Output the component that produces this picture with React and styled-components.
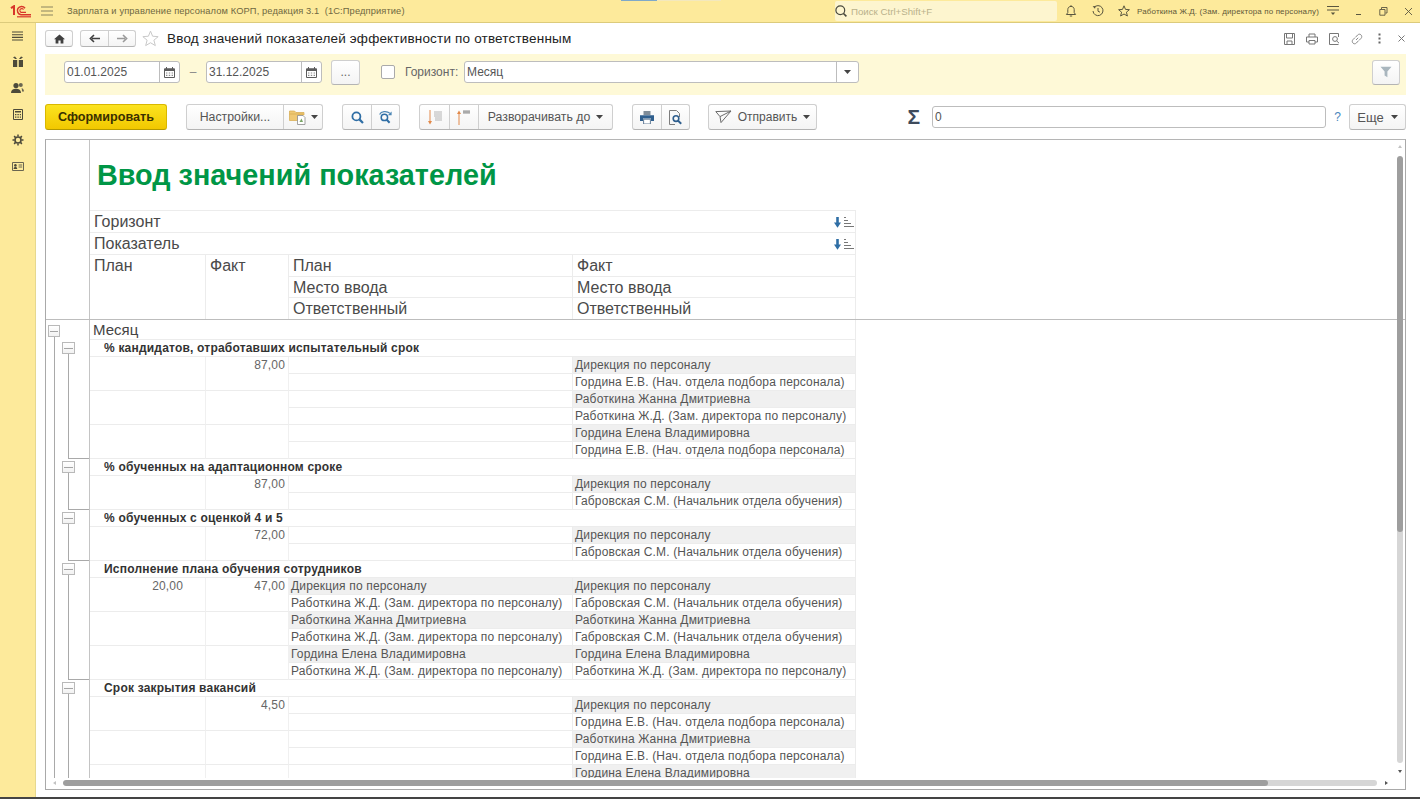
import React from "react";
import styled, { createGlobalStyle } from "styled-components";

const GlobalStyle = createGlobalStyle`
  html, body {
    margin: 0;
    padding: 0;
    background: #fff;
    overflow: hidden;
  }
  * { box-sizing: border-box; }
  body {
    font-family: "Liberation Sans", Arial, sans-serif;
    color: #4a4a4a;
  }
`;

const groups = [
  {
    title: "% кандидатов, отработавших испытательный срок",
    pairs: [
      { fact: "87,00", rows: [["", "Дирекция по персоналу"], ["", "Гордина Е.В. (Нач. отдела подбора персонала)"]] },
      { rows: [["", "Работкина Жанна Дмитриевна"], ["", "Работкина Ж.Д. (Зам. директора по персоналу)"]] },
      { rows: [["", "Гордина Елена Владимировна"], ["", "Гордина Е.В. (Нач. отдела подбора персонала)"]] },
    ],
  },
  {
    title: "% обученных на адаптационном сроке",
    pairs: [
      { fact: "87,00", rows: [["", "Дирекция по персоналу"], ["", "Габровская С.М. (Начальник отдела обучения)"]] },
    ],
  },
  {
    title: "% обученных с оценкой 4 и 5",
    pairs: [
      { fact: "72,00", rows: [["", "Дирекция по персоналу"], ["", "Габровская С.М. (Начальник отдела обучения)"]] },
    ],
  },
  {
    title: "Исполнение плана обучения сотрудников",
    pairs: [
      {
        plan: "20,00",
        fact: "47,00",
        rows: [
          ["Дирекция по персоналу", "Дирекция по персоналу"],
          ["Работкина Ж.Д. (Зам. директора по персоналу)", "Габровская С.М. (Начальник отдела обучения)"],
        ],
      },
      {
        rows: [
          ["Работкина Жанна Дмитриевна", "Работкина Жанна Дмитриевна"],
          ["Работкина Ж.Д. (Зам. директора по персоналу)", "Габровская С.М. (Начальник отдела обучения)"],
        ],
      },
      {
        rows: [
          ["Гордина Елена Владимировна", "Гордина Елена Владимировна"],
          ["Работкина Ж.Д. (Зам. директора по персоналу)", "Работкина Ж.Д. (Зам. директора по персоналу)"],
        ],
      },
    ],
  },
  {
    title: "Срок закрытия вакансий",
    pairs: [
      { fact: "4,50", rows: [["", "Дирекция по персоналу"], ["", "Гордина Е.В. (Нач. отдела подбора персонала)"]] },
      { rows: [["", "Работкина Жанна Дмитриевна"], ["", "Гордина Е.В. (Нач. отдела подбора персонала)"]] },
      { rows: [["", "Гордина Елена Владимировна"]] },
    ],
  },
];

// Icons
const Svg = ({ size = 16, h, children }) => (
  <svg width={size} height={h || size} viewBox={`0 0 ${size} ${h || size}`} fill="none" style={{ display: "block", flex: "none" }}>
    {children}
  </svg>
);

const Logo = () => (
  <svg width="22" height="13" viewBox="0 0 22 13" fill="none" style={{ display: "block" }}>
    <path d="M1 3.2 L4 1.2 V10" stroke="#d8352a" strokeWidth="2" />
    <path d="M15 3.2 A4.2 4.2 0 1 0 11 9.8 H21" stroke="#d8352a" strokeWidth="1.5" />
    <path d="M13.6 4.6 A2 2 0 1 0 11 7.4 H16" stroke="#d8352a" strokeWidth="1.1" />
    <path d="M7 11.8 H21" stroke="#d8352a" strokeWidth="1.2" />
  </svg>
);

const BurgerThin = ({ color = "#8a8460", width = 12 }) => (
  <Svg size={width} h={10}>
    <path d={`M0 1H${width}M0 5H${width}M0 9H${width}`} stroke={color} />
  </Svg>
);

const SideMenu = () => (
  <Svg size={11} h={10}>
    <path d="M0 1H11M0 3.7H11M0 6.4H11M0 9H11" stroke="#4d4a3a" strokeWidth="1.1" />
  </Svg>
);
const SideGift = () => (
  <Svg size={12}>
    <path d="M1 4H5.2V11H1ZM6.8 4H11V11H6.8ZM1 1.2L3.2 3H5L3 .6ZM11 1.2L8.8 3H7L9 .6Z" fill="#4d4a3a" />
  </Svg>
);
const SideUsers = () => (
  <Svg size={13} h={12}>
    <circle cx="5" cy="3.6" r="2.6" fill="#4d4a3a" />
    <path d="M0 11C0 8 2 6.8 5 6.8S10 8 10 11Z" fill="#4d4a3a" />
    <circle cx="9.8" cy="3" r="2" fill="#6a6651" />
    <path d="M10.6 6C12 6.4 13 7.6 13 9.6H11C11 8 10.8 7 10.6 6Z" fill="#6a6651" />
  </Svg>
);
const SideCalc = () => (
  <Svg size={10} h={11}>
    <path d="M.5.5H9.5V10.5H.5Z" stroke="#4d4a3a" />
    <path d="M2 2H8V3.6H2ZM2 5H3.4V6.2H2ZM4.4 5H5.8V6.2H4.4ZM6.8 5H8V6.2H6.8ZM2 7.4H3.4V8.8H2ZM4.4 7.4H5.8V8.8H4.4ZM6.8 7.4H8V8.8H6.8Z" fill="#4d4a3a" />
  </Svg>
);
const SideGear = () => (
  <Svg size={12}>
    <circle cx="6" cy="6" r="3" stroke="#4d4a3a" strokeWidth="1.6" />
    <path d="M6 .5V2.6M6 9.4V11.5M.5 6H2.6M9.4 6H11.5M2.1 2.1L3.6 3.6M8.4 8.4L9.9 9.9M9.9 2.1L8.4 3.6M3.6 8.4L2.1 9.9" stroke="#4d4a3a" strokeWidth="1.5" />
  </Svg>
);
const SideCard = () => (
  <Svg size={12} h={9}>
    <path d="M.5.5H11.5V8.5H.5Z" stroke="#6a6651" />
    <circle cx="3.4" cy="3.4" r="1.3" fill="#4d4a3a" />
    <path d="M1.6 7C1.6 5.6 2.4 5 3.4 5S5.2 5.6 5.2 7Z" fill="#4d4a3a" />
    <path d="M6.6 3H10.2M6.6 5H10.2" stroke="#6a6651" />
  </Svg>
);

const SearchGlass = () => (
  <Svg size={12}>
    <circle cx="5.3" cy="5.3" r="4.4" stroke="#4a4a3e" strokeWidth="1.2" />
    <path d="M8.5 8.5L11.4 11.4" stroke="#4a4a3e" strokeWidth="1.6" />
  </Svg>
);
const Bell = () => (
  <Svg size={12}>
    <path d="M1.4 9.5H10.6L9.2 7.6V4.6C9.2 2.6 7.8 1.4 6 1.4S2.8 2.6 2.8 4.6V7.6Z" stroke="#5a563f" />
    <path d="M6 .2V1.4M4.8 11H7.2" stroke="#5a563f" />
  </Svg>
);
const History = () => (
  <Svg size={12}>
    <path d="M2 2.6A5 5 0 1 1 1 6" stroke="#5a563f" />
    <path d="M.6 1.2L3.8 1L3 3.8Z" fill="#5a563f" />
    <path d="M6 3V6.2L8 7.2" stroke="#5a563f" />
  </Svg>
);
const Star = ({ size = 12, color = "#5a563f" }) => (
  <svg width={size} height={size} viewBox="0 0 12 12" fill="none" style={{ display: "block", flex: "none" }}>
    <path d="M6 .8L7.5 4.4L11.4 4.7L8.4 7.2L9.4 11L6 9L2.6 11L3.6 7.2L.6 4.7L4.5 4.4Z" stroke={color} strokeWidth={12 / size} />
  </svg>
);
const MenuArrow = () => (
  <Svg size={12} h={10}>
    <path d="M0 .5H12M0 4H12" stroke="#5a563f" />
    <path d="M3.8 6.6H8.2L6 9Z" fill="#5a563f" />
  </Svg>
);
const WinMin = () => (
  <Svg size={8} h={8}>
    <path d="M1 7.5H6" stroke="#5a563f" />
  </Svg>
);
const WinRestore = () => (
  <Svg size={9} h={9}>
    <path d="M2.5 2V.5H8V6H6.5M.8 2.5H6V8.2H.8Z" stroke="#5a563f" strokeWidth=".9" />
  </Svg>
);
const WinClose = () => (
  <Svg size={9} h={9}>
    <path d="M1 1L8 8M8 1L1 8" stroke="#5a563f" strokeWidth=".9" />
  </Svg>
);

const Home = () => (
  <Svg size={11} h={10}>
    <path d="M5.5.5L0 5.2H1.6V9.6H4.4V6.4H6.6V9.6H9.4V5.2H11Z" fill="#3f3f3f" />
  </Svg>
);
const ArrowNav = ({ $dir, color }) => (
  <Svg size={11} h={9}>
    <path d={$dir === "left" ? "M11 4.5H3M5 1L1.4 4.5L5 8" : "M0 4.5H8M6 1L9.6 4.5L6 8"} stroke={color} strokeWidth="1.6" />
  </Svg>
);
const DiskIcon = () => (
  <Svg size={11} h={12}>
    <path d="M.5.5H10.5V11.5H.5Z" stroke="#777" />
    <path d="M2.5 1V5H8.5V1M3 8H8V11.5H3Z" stroke="#777" />
  </Svg>
);
const PrintSmall = () => (
  <Svg size={12}>
    <path d="M3 4V1H9V4M.5 4H11.5V9H9M3 9H.5V4M3 7.5H9V11H3Z" stroke="#777" />
  </Svg>
);
const PreviewSmall = () => (
  <Svg size={11} h={12}>
    <path d="M9.5 4V.5H.5V11.5H9.5" stroke="#777" />
    <circle cx="6" cy="6" r="2.4" stroke="#777" />
    <path d="M7.6 7.8L10 10.2" stroke="#777" />
  </Svg>
);
const LinkIcon = () => (
  <Svg size={12}>
    <path d="M5 7L7.2 4.8M4.6 4.2L6.6 2C7.6 1 9 .9 10 1.9S11 4.4 10 5.4L8 7.4M7.4 7.8L5.4 10C4.4 11 3 11.1 2 10.1S1 7.6 2 6.6L4 4.6" stroke="#8a8a8a" />
  </Svg>
);
const KebabIcon = () => (
  <Svg size={3} h={11}>
    <path d="M.5 .5H2.5V2.5H.5ZM.5 4.5H2.5V6.5H.5ZM.5 8.5H2.5V10.5H.5Z" fill="#666" />
  </Svg>
);
const CloseSmall = () => (
  <Svg size={7} h={7}>
    <path d="M.5.5L6.5 6.5M6.5.5L.5 6.5" stroke="#777" />
  </Svg>
);
const CalendarIcon = () => (
  <Svg size={11}>
    <path d="M.5 1.8H10.5V10.5H.5Z" stroke="#5c5c5c" />
    <path d="M.5 1.8H10.5V4H.5Z" fill="#5c5c5c" />
    <path d="M2.5 0V2M8.5 0V2" stroke="#5c5c5c" />
    <path d="M2 5.4H3.4V6.6H2ZM4.8 5.4H6.2V6.6H4.8ZM7.6 5.4H9V6.6H7.6ZM2 7.8H3.4V9H2ZM4.8 7.8H6.2V9H4.8ZM7.6 7.8H9V9H7.6Z" fill="#8a8a8a" />
  </Svg>
);
const Caret = ({ color = "#444" }) => (
  <Svg size={7} h={4}>
    <path d="M0 0H7L3.5 4Z" fill={color} />
  </Svg>
);
const FunnelIcon = () => (
  <Svg size={12} h={12}>
    <path d="M.5 .8H11.5L7.4 5.6V11.2L4.6 9.6V5.6Z" fill="#a9b6be" />
  </Svg>
);
const FolderIcon = () => (
  <Svg size={18} h={16}>
    <path d="M.5 2V11.5H9V6H15V3.5H7L5.5 2Z" fill="#efc873" stroke="#d6a94c" strokeWidth=".7" />
    <path d="M.5 5H14" stroke="#d6a94c" strokeWidth=".7" />
    <path d="M8.5 6.5H14L16 8.5V15.5H8.5Z" fill="#fff" stroke="#8b8b8b" strokeWidth=".8" />
    <path d="M10.5 13L12.5 9.5L14 13Z" fill="#79a565" />
  </Svg>
);
const SearchBlue = () => (
  <Svg size={13}>
    <circle cx="5.4" cy="5.4" r="4" stroke="#2f6ea5" strokeWidth="1.8" />
    <path d="M8.4 8.4L12 12" stroke="#2f6ea5" strokeWidth="2.2" />
  </Svg>
);
const SearchAgain = () => (
  <Svg size={15} h={14}>
    <path d="M1.6 4.4C3 1.4 8.4.4 12.2 3.4" stroke="#4d86b5" strokeWidth="1.2" />
    <path d="M13.6 1.4V5.2H9.8Z" fill="#4d86b5" />
    <circle cx="6.4" cy="7.4" r="3.2" stroke="#2f6ea5" strokeWidth="1.5" />
    <path d="M8.8 9.8L11.6 12.8" stroke="#2f6ea5" strokeWidth="2" />
  </Svg>
);
const SortDownIcon = () => (
  <Svg size={16} h={15}>
    <path d="M3 0V13" stroke="#e2894a" />
    <path d="M1 11L3 14.5L5 11Z" fill="#e2894a" />
    <path d="M7 2H15M7 4H15M7 6H15M8 8H15M8 10H15" stroke="#b4b4b4" />
  </Svg>
);
const SortUpIcon = () => (
  <Svg size={16} h={15}>
    <path d="M3 15V2" stroke="#e2894a" />
    <path d="M1 4L3 .5L5 4Z" fill="#e2894a" />
    <path d="M7 1H14M7 3H14" stroke="#8f8f8f" />
    <path d="M7 2H14" stroke="#8f8f8f" />
  </Svg>
);
const PrinterBlue = () => (
  <Svg size={14} h={13}>
    <path d="M3.5 0H10.5V4H3.5Z" fill="#7f8c98" />
    <path d="M0 4.2H14V10H11V7.6H3V10H0Z" fill="#2f5f8e" />
    <path d="M3.6 8.2H10.4V13H3.6Z" fill="#fff" stroke="#55718d" strokeWidth=".9" />
  </Svg>
);
const PreviewBlue = () => (
  <Svg size={13} h={15}>
    <path d="M.5.5H7.5L10.5 3.5V7M6 14.5H.5V.5" stroke="#7d7d7d" fill="#f7f7f7" />
    <circle cx="7" cy="8.6" r="2.8" stroke="#2f5f8e" strokeWidth="1.6" />
    <path d="M9 10.6L12.2 13.8" stroke="#2f5f8e" strokeWidth="2" />
  </Svg>
);
const SendIcon = () => (
  <Svg size={17} h={14}>
    <path d="M.8 1.6L16 1L6 12.6L5 6.6ZM5 6.6L16 1" stroke="#6a6a6a" />
  </Svg>
);
const SortMark = () => (
  <Svg size={20} h={12}>
    <path d="M3.5 1V8" stroke="#2f6ea5" strokeWidth="2.6" />
    <path d="M0 6.6H7L3.5 11.8Z" fill="#2f6ea5" />
    <path d="M10 1.5H12M10 4.5H14M10 7.5H17M10 10.5H20" stroke="#777" />
  </Svg>
);

// Window title
const Page = styled.div`
  width: 1420px;
  height: 799px;
  display: flex;
  flex-direction: column;
  overflow: hidden;
  background: #fff;
  border-bottom: 2px solid #444;
`;

const TitleBar = styled.div`
  position: relative;
  flex: none;
  height: 23px;
  display: flex;
  align-items: center;
  background: #fdea9b;
  border-bottom: 1px solid #dccb7c;
`;

const ActiveStrip = styled.div`
  position: absolute;
  top: 0;
  left: 621px;
  width: 100px;
  height: 1px;
  background: linear-gradient(to right, #7fa9c9 0, #7fa9c9 36px, #f3e8bd 36px);
`;

const LogoBox = styled.div`
  width: 41px;
  padding-left: 10px;
  flex: none;
`;

const AppName = styled.div`
  margin-left: 14px;
  font-size: 9.3px;
  letter-spacing: 0.12px;
  color: #6f6841;
  white-space: pre;
  width: 768px;
  flex: none;
`;

const SearchBox = styled.div`
  flex: none;
  width: 222px;
  height: 20px;
  display: flex;
  align-items: center;
  gap: 4px;
  padding-left: 0;
  background: #fdf5cf;
  border-radius: 2px;
  font-size: 9.7px;
  color: #b9b18b;
`;

const TitleIcons = styled.div`
  display: flex;
  align-items: center;
`;

const WinControls = styled(TitleIcons)`
  margin-left: 3px;
`;

const TitleIcon = styled.div`
  width: ${p => p.$w || 25}px;
  display: flex;
  justify-content: center;
  flex: none;
`;

const UserName = styled.div`
  flex: none;
  width: 186px;
  font-size: 8px;
  letter-spacing: 0.13px;
  color: #5e5838;
  white-space: nowrap;
`;

// Main area
const Body = styled.div`
  flex: 1;
  display: flex;
  min-height: 0;
`;

const Sidebar = styled.div`
  flex: none;
  width: 36px;
  display: flex;
  flex-direction: column;
  align-items: center;
  background: #fdea9b;
  border-right: 1px solid #e6d88f;
`;

const SideItem = styled.div`
  width: 100%;
  height: 26px;
  display: flex;
  align-items: center;
  justify-content: center;
`;

const Main = styled.div`
  flex: 1;
  min-width: 0;
  padding: 7px 14px 0 9px;
  display: flex;
  flex-direction: column;
`;

const FormHeader = styled.div`
  flex: none;
  height: 17px;
  display: flex;
  align-items: center;
`;

const Btn = styled.div`
  flex: none;
  display: flex;
  align-items: center;
  justify-content: center;
  gap: ${p => p.$gap || 0}px;
  width: ${p => (p.$w ? `${p.$w}px` : "auto")};
  height: 100%;
  font-size: 12px;
  color: #555;
  background: linear-gradient(#fff, #f4f4f4);
  border: 1px solid #cfcfcf;
  border-bottom-color: #b4b4b4;
  border-radius: 3px;
  white-space: nowrap;
`;

const BtnGroup = styled.div`
  flex: none;
  display: flex;
  height: 100%;
  background: linear-gradient(#fff, #f4f4f4);
  border: 1px solid #cfcfcf;
  border-bottom-color: #b4b4b4;
  border-radius: 3px;
`;

const GroupPart = styled.div`
  flex: none;
  width: ${p => p.$w}px;
  display: flex;
  align-items: center;
  justify-content: center;
  gap: ${p => p.$gap || 0}px;
  font-size: 12.3px;
  color: #555;
  white-space: nowrap;
  & + & {
    border-left: 1px solid #cfcfcf;
  }
`;

const NavGroup = styled(BtnGroup)`
  margin-left: 7px;
`;

const FavStar = styled.div`
  margin-left: 6px;
  width: 18px;
  flex: none;
`;

const FormTitle = styled.div`
  margin-left: 7px;
  font-size: 13.5px;
  color: #222;
  letter-spacing: 0.18px;
  white-space: nowrap;
`;

const FormActions = styled.div`
  margin-left: auto;
  margin-right: -7px;
  display: flex;
  align-items: center;
`;

const FormAction = styled.div`
  width: 22.4px;
  display: flex;
  justify-content: center;
`;

const FilterPanel = styled.div`
  flex: none;
  margin-top: 7px;
  height: 41px;
  padding: 0 6px 5px 19px;
  display: flex;
  align-items: center;
  background: #fef9d7;
`;

const Field = styled.div`
  flex: none;
  height: 22px;
  width: ${p => p.$w}px;
  margin-left: ${p => p.$ml || 0}px;
  display: flex;
  background: #fff;
  border: 1px solid #bdbdbd;
  border-radius: 3px;
`;

const FieldValue = styled.div`
  flex: 1;
  min-width: 0;
  padding-left: 2px;
  font-size: 12px;
  line-height: 20px;
  color: #555;
`;

const FieldAddon = styled.div`
  flex: none;
  width: ${p => p.$w || 20}px;
  display: flex;
  align-items: center;
  justify-content: center;
  border-left: 1px solid #bdbdbd;
`;

const Dash = styled.div`
  flex: none;
  width: 26px;
  text-align: center;
  font-size: 12px;
  color: #888;
`;

const PanelBtn = styled(Btn)`
  height: 25px;
  margin-left: ${p => p.$ml || 0}px;
  color: #666;
`;

const Check = styled.div`
  flex: none;
  width: 14px;
  height: 14px;
  margin-left: 21px;
  background: #fff;
  border: 1px solid #aaa;
  border-radius: 2px;
`;

const FieldLabel = styled.div`
  flex: none;
  width: 54px;
  margin-left: 10px;
  font-size: 12px;
  color: #666;
  white-space: nowrap;
`;

const FilterBtn = styled(PanelBtn)`
  margin-left: auto;
`;

const Toolbar = styled.div`
  flex: none;
  margin-top: 9px;
  height: 26px;
  display: flex;
  align-items: stretch;
  gap: 19px;
`;

const PrimaryBtn = styled(Btn)`
  font-weight: bold;
  font-size: 12.6px;
  color: #3a3000;
  background: linear-gradient(#fbe320, #f2c800);
  border-color: #d9b800;
  border-bottom-color: #b59a00;
`;

const SendBtn = styled(Btn)`
  margin-left: -1px;
`;

const TotalArea = styled.div`
  flex: 1;
  min-width: 0;
  display: flex;
  align-items: center;
  justify-content: flex-end;
`;

const Sigma = styled.div`
  flex: none;
  font-size: 21px;
  font-weight: bold;
  color: #3e4a5c;
  margin-right: 12px;
`;

const MoreBtn = styled(Btn)`
  font-size: 13px;
`;

const Hint = styled.div`
  flex: none;
  width: 23px;
  text-align: center;
  font-size: 12px;
  color: #4a86bd;
`;

// Report
const Frame = styled.div`
  position: relative;
  flex: none;
  margin-top: 9px;
  height: 651px;
  display: flex;
  flex-direction: column;
  border: 1px solid #a9a9a9;
  border-top-color: #b5b5b5;
  background: #fff;
`;

const Viewport = styled.div`
  flex: 1;
  min-height: 0;
  overflow: hidden;
`;

const ReportHead = styled.div`
  display: flex;
  border-bottom: 1px solid #bdbdbd;
`;

const HeadGutter = styled.div`
  flex: none;
  width: 44px;
  border-right: 1px solid #c4c4c4;
`;

const HeadBody = styled.div`
  flex: none;
  width: 766px;
`;

const ReportTitle = styled.div`
  height: 71px;
  padding: 17px 0 0 7px;
  font-size: 28.8px;
  line-height: 36px;
  font-weight: bold;
  color: #009646;
  white-space: nowrap;
  border-bottom: 1px solid #ececec;
`;

const HeadRow = styled.div`
  height: 22px;
  display: flex;
  align-items: center;
  justify-content: space-between;
  padding: 0 1px 0 4px;
  font-size: 16px;
  color: #4a4a4a;
  border-right: 1px solid #ececec;
  border-bottom: 1px solid #ececec;
`;

const HeadColumns = styled.div`
  display: grid;
  grid-template-columns: 116px 83px 284px 283px;
  grid-template-rows: 21.5px 21px 21.5px;
  height: 64px;
`;

const HeadCell = styled.div`
  grid-column: ${p => p.$col || "auto"};
  grid-row: ${p => (p.$span ? "1 / 4" : "auto")};
  padding-left: 4px;
  font-size: 16px;
  line-height: 22px;
  color: #4a4a4a;
  border-right: 1px solid #ececec;
  border-bottom: ${p => (p.$last || p.$span ? "none" : "1px solid #ececec")};
`;

const Tree = styled.div`
  display: flex;
`;

const Rail = styled.div`
  flex: none;
  width: 16px;
  padding: 5px 0 0 2px;
  display: flex;
  flex-direction: column;
`;

const Toggle = styled.div`
  flex: none;
  width: ${p => p.$w}px;
  height: 12px;
  display: flex;
  align-items: center;
  justify-content: center;
  background: linear-gradient(#fff, #f2f2f2);
  border: 1px solid #b9b9b9;
  &::after {
    content: "";
    width: 100%;
    height: 1px;
    margin: 0 1px;
    background: #a5a5a5;
  }
`;

const RailLine = styled.div`
  flex: 1;
  width: 1px;
  margin-left: 6px;
  background: #a9a9a9;
`;

const TreeBody = styled.div`
  flex: none;
  width: 794px;
`;

const MonthRow = styled.div`
  display: flex;
  height: 20px;
`;

const SeparatorGutter = styled.div`
  flex: none;
  width: 28px;
  border-right: 1px solid #c4c4c4;
`;

const MonthLabel = styled.div`
  flex: none;
  width: 766px;
  padding-left: 3px;
  font-size: 15px;
  line-height: 20px;
  color: #444;
  border-right: 1px solid #ececec;
  border-bottom: 1px solid #ececec;
`;

const Group = styled.div`
  display: flex;
`;

const GroupRail = styled.div`
  flex: none;
  width: 28px;
  padding-top: 2px;
  display: flex;
  flex-direction: column;
  border-right: 1px solid #c4c4c4;
`;

const GroupLine = styled.div`
  flex: 1;
  margin-left: 6px;
  border-left: 1px solid #a9a9a9;
  border-bottom: 1px solid #a9a9a9;
`;

const GroupBody = styled.div`
  flex: none;
  width: 766px;
`;

const GroupTitle = styled.div`
  height: 17px;
  padding-left: 14px;
  font-size: 12px;
  line-height: 16px;
  font-weight: bold;
  letter-spacing: 0.2px;
  color: #333;
  white-space: nowrap;
  border-right: 1px solid #ececec;
  border-bottom: 1px solid #ececec;
`;

const Pair = styled.div`
  display: grid;
  grid-template-columns: 116px 83px 567px;
`;

const NumCell = styled.div`
  padding-right: ${p => p.$pr}px;
  text-align: right;
  font-size: 12px;
  line-height: 16px;
  letter-spacing: 0.15px;
  color: #666;
  border-right: 1px solid #f0f0f0;
  border-bottom: 1px solid #ececec;
`;

const PairRows = styled.div`
  display: flex;
  flex-direction: column;
`;

const PlaceRow = styled.div`
  display: grid;
  grid-template-columns: 284px 283px;
`;

const PlaceCell = styled.div`
  height: 17px;
  padding-left: 2px;
  font-size: 12px;
  line-height: 16px;
  letter-spacing: 0.16px;
  color: #555;
  white-space: nowrap;
  overflow: hidden;
  background: ${p => (p.$shaded ? "#f0f0f0" : "#fff")};
  border-right: 1px solid #ececec;
  border-bottom: 1px solid #ececec;
`;

const HScroll = styled.div`
  flex: none;
  height: 11px;
  display: flex;
  align-items: center;
  padding: 0 17px 1px 7px;
`;

const ScrollTrack = styled.div`
  flex: 1;
  height: 6px;
  margin: 0 8px 0 7px;
  border-radius: 3px;
  background: #d6d6d6;
  overflow: hidden;
`;

const ScrollThumbH = styled.div`
  height: 100%;
  border-radius: 3px;
  background: #9e9e9e;
`;

const ArrowSide = styled.div`
  flex: none;
  width: 0;
  height: 0;
  border-top: 2.5px solid transparent;
  border-bottom: 2.5px solid transparent;
  ${p =>
    p.$left
      ? "border-right: 3px solid #c2c2c2;"
      : "border-left: 3px solid #555;"}
`;

const VScroll = styled.div`
  position: absolute;
  top: 5px;
  right: 2px;
  bottom: 16px;
  width: 6px;
  display: flex;
  flex-direction: column;
  align-items: center;
`;

const ArrowVert = styled.div`
  flex: none;
  width: 0;
  height: 0;
  border-left: 2.5px solid transparent;
  border-right: 2.5px solid transparent;
  ${p =>
    p.$up
      ? "border-bottom: 3px solid #c2c2c2; margin-bottom: 8px;"
      : "border-top: 3px solid #555; margin-top: 7px;"}
`;

const VTrack = styled.div`
  flex: 1;
  width: 6px;
  border-radius: 3px;
  background: #d6d6d6;
  overflow: hidden;
`;

const VThumb = styled.div`
  width: 100%;
  border-radius: 3px;
  background: #9e9e9e;
`;

const PairBlock = ({ pair }) => (
  <Pair>
    <NumCell $pr={22}>{pair.plan}</NumCell>
    <NumCell $pr={3}>{pair.fact}</NumCell>
    <PairRows>
      {pair.rows.map((row, i) => (
        <PlaceRow key={i}>
          <PlaceCell $shaded={i === 0 && !!row[0]}>{row[0]}</PlaceCell>
          <PlaceCell $shaded={i === 0 && !!row[1]}>{row[1]}</PlaceCell>
        </PlaceRow>
      ))}
    </PairRows>
  </Pair>
);

const GroupBlock = ({ group }) => (
  <Group>
    <GroupRail>
      <Toggle $w={13} />
      <GroupLine />
    </GroupRail>
    <GroupBody>
      <GroupTitle>{group.title}</GroupTitle>
      {group.pairs.map((pair, i) => (
        <PairBlock key={i} pair={pair} />
      ))}
    </GroupBody>
  </Group>
);

const Report = () => (
  <Frame>
    <Viewport>
      <ReportHead>
        <HeadGutter />
        <HeadBody>
          <ReportTitle>Ввод значений показателей</ReportTitle>
          <HeadRow>
            Горизонт
            <SortMark />
          </HeadRow>
          <HeadRow>
            Показатель
            <SortMark />
          </HeadRow>
          <HeadColumns>
            <HeadCell $span>План</HeadCell>
            <HeadCell $span>Факт</HeadCell>
            <HeadCell>План</HeadCell>
            <HeadCell>Факт</HeadCell>
            <HeadCell $col={3}>Место ввода</HeadCell>
            <HeadCell>Место ввода</HeadCell>
            <HeadCell $last $col={3}>Ответственный</HeadCell>
            <HeadCell $last>Ответственный</HeadCell>
          </HeadColumns>
        </HeadBody>
      </ReportHead>
      <Tree>
        <Rail>
          <Toggle $w={12} />
          <RailLine />
        </Rail>
        <TreeBody>
          <MonthRow>
            <SeparatorGutter />
            <MonthLabel>Месяц</MonthLabel>
          </MonthRow>
          {groups.map((group, i) => (
            <GroupBlock key={i} group={group} />
          ))}
        </TreeBody>
      </Tree>
    </Viewport>
    <HScroll>
      <ArrowSide $left />
      <ScrollTrack>
        <ScrollThumbH style={{ width: "91.7%" }} />
      </ScrollTrack>
      <ArrowSide />
    </HScroll>
    <VScroll>
      <ArrowVert $up />
      <VTrack>
        <VThumb style={{ height: "62%" }} />
      </VTrack>
      <ArrowVert />
    </VScroll>
  </Frame>
);

export default function App() {
  return (
    <Page>
      <GlobalStyle />
      <TitleBar>
        <ActiveStrip />
        <LogoBox>
          <Logo />
        </LogoBox>
        <BurgerThin />
        <AppName>{"Зарплата и управление персоналом КОРП, редакция 3.1  (1С:Предприятие)"}</AppName>
        <SearchBox>
          <SearchGlass />
          Поиск Ctrl+Shift+F
        </SearchBox>
        <TitleIcons>
          <TitleIcon $w={28}><Bell /></TitleIcon>
          <TitleIcon><History /></TitleIcon>
          <TitleIcon $w={27}><Star /></TitleIcon>
        </TitleIcons>
        <UserName>Работкина Ж.Д. (Зам. директора по персоналу)</UserName>
        <TitleIcons>
          <TitleIcon $w={20}><MenuArrow /></TitleIcon>
        </TitleIcons>
        <WinControls>
          <TitleIcon><WinMin /></TitleIcon>
          <TitleIcon><WinRestore /></TitleIcon>
          <TitleIcon><WinClose /></TitleIcon>
        </WinControls>
      </TitleBar>
      <Body>
        <Sidebar>
          <SideItem><SideMenu /></SideItem>
          <SideItem><SideGift /></SideItem>
          <SideItem><SideUsers /></SideItem>
          <SideItem><SideCalc /></SideItem>
          <SideItem><SideGear /></SideItem>
          <SideItem><SideCard /></SideItem>
        </Sidebar>
        <Main>
          <FormHeader>
            <Btn $w={28}><Home /></Btn>
            <NavGroup>
              <GroupPart $w={27}><ArrowNav $dir="left" color="#3f3f3f" /></GroupPart>
              <GroupPart $w={27}><ArrowNav $dir="right" color="#9a9a9a" /></GroupPart>
            </NavGroup>
            <FavStar><Star size={17} color="#c9c9c9" /></FavStar>
            <FormTitle>Ввод значений показателей эффективности по ответственным</FormTitle>
            <FormActions>
              <FormAction><DiskIcon /></FormAction>
              <FormAction><PrintSmall /></FormAction>
              <FormAction><PreviewSmall /></FormAction>
              <FormAction><LinkIcon /></FormAction>
              <FormAction><KebabIcon /></FormAction>
              <FormAction><CloseSmall /></FormAction>
            </FormActions>
          </FormHeader>
          <FilterPanel>
            <Field $w={116}>
              <FieldValue>01.01.2025</FieldValue>
              <FieldAddon><CalendarIcon /></FieldAddon>
            </Field>
            <Dash>–</Dash>
            <Field $w={116}>
              <FieldValue>31.12.2025</FieldValue>
              <FieldAddon><CalendarIcon /></FieldAddon>
            </Field>
            <PanelBtn $w={29} $ml={9}>...</PanelBtn>
            <Check />
            <FieldLabel>Горизонт:</FieldLabel>
            <Field $w={395} $ml={5}>
              <FieldValue>Месяц</FieldValue>
              <FieldAddon $w={22}><Caret /></FieldAddon>
            </Field>
            <FilterBtn $w={28}><FunnelIcon /></FilterBtn>
          </FilterPanel>
          <Toolbar>
            <PrimaryBtn $w={122}>Сформировать</PrimaryBtn>
            <BtnGroup>
              <GroupPart $w={96}>Настройки...</GroupPart>
              <GroupPart $w={39} $gap={4}><FolderIcon /><Caret /></GroupPart>
            </BtnGroup>
            <BtnGroup>
              <GroupPart $w={28}><SearchBlue /></GroupPart>
              <GroupPart $w={28}><SearchAgain /></GroupPart>
            </BtnGroup>
            <BtnGroup>
              <GroupPart $w={29}><SortDownIcon /></GroupPart>
              <GroupPart $w={29}><SortUpIcon /></GroupPart>
              <GroupPart $w={134} $gap={6}>Разворачивать до<Caret /></GroupPart>
            </BtnGroup>
            <BtnGroup>
              <GroupPart $w={28}><PrinterBlue /></GroupPart>
              <GroupPart $w={28}><PreviewBlue /></GroupPart>
            </BtnGroup>
            <SendBtn $w={109} $gap={6}><SendIcon />Отправить<Caret /></SendBtn>
            <TotalArea>
              <Sigma>Σ</Sigma>
              <Field $w={394}>
                <FieldValue>0</FieldValue>
              </Field>
              <Hint>?</Hint>
              <MoreBtn $w={57} $gap={7}>Еще<Caret /></MoreBtn>
            </TotalArea>
          </Toolbar>
          <Report />
        </Main>
      </Body>
    </Page>
  );
}
